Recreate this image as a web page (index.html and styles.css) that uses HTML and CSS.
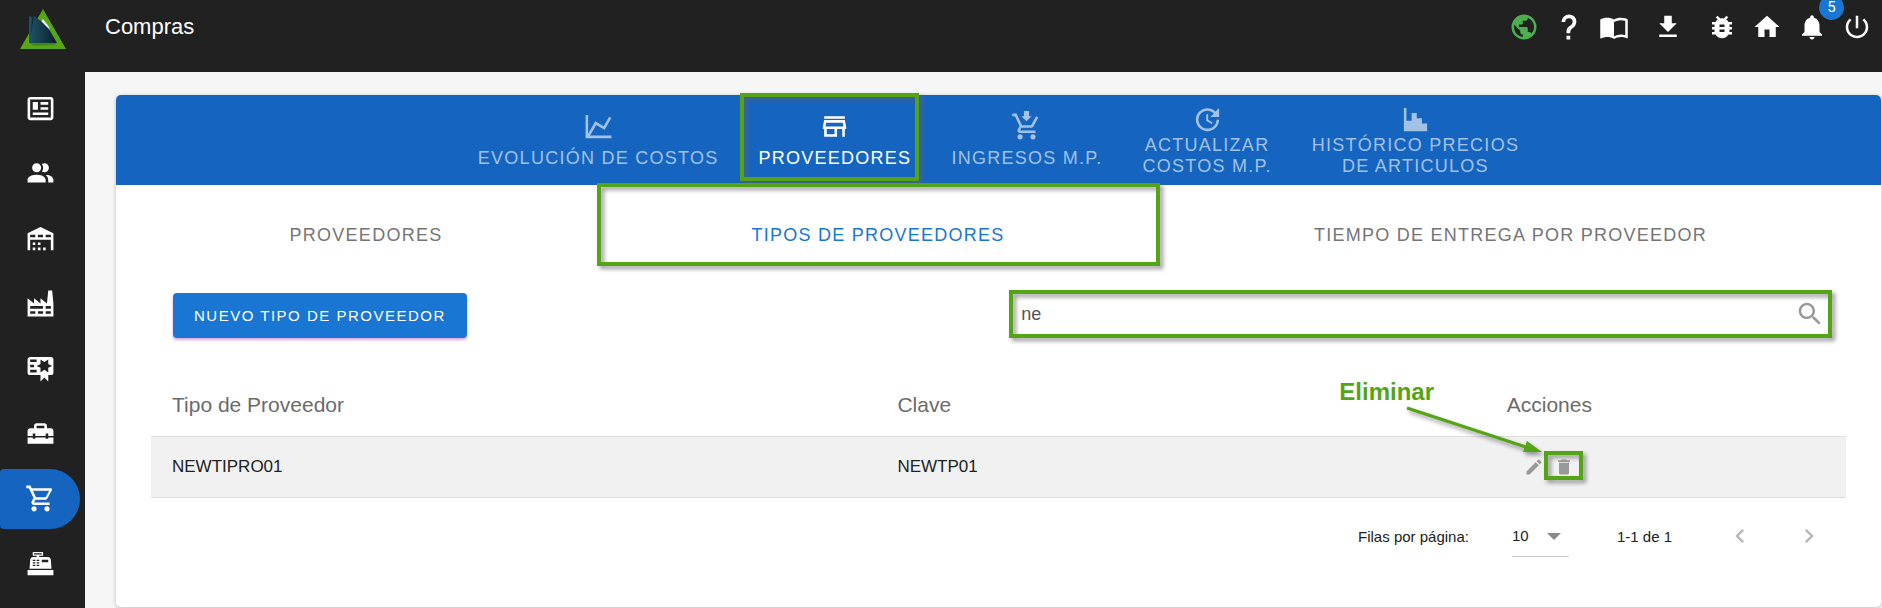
FILE: index.html
```
<!DOCTYPE html>
<html lang="es">
<head>
    <meta charset="UTF-8">
    <meta name="viewport" content="width=device-width, initial-scale=1.0">
    <title>Compras</title>
    <link rel="stylesheet" href="styles.css">
</head>
<body>
    <header class="topbar">
        <a class="logo" href="#" aria-label="Inicio">
            <svg width="46" height="42" viewBox="0 0 46 42">
                <defs>
                    <linearGradient id="azul" x1="0" x2="1">
                        <stop offset="0" stop-color="#1f5368"/>
                        <stop offset="1" stop-color="#08202c"/>
                    </linearGradient>
                </defs>
                <path fill="#58a618" d="M23 0L46 40H0Z"/>
                <path fill="#3f8a12" d="M9 34l28 0-2 2-20 1z"/>
                <path fill="#fff" d="M21 13l2-3 6 8 1 5z"/>
                <path fill="url(#azul)" d="M9 7l3 1 2-1 7 5 8 8 8 14H9z"/>
                <path fill="#0d2f3e" d="M12 8l2-1-3 20z"/>
            </svg>
        </a>
        <h1>Compras</h1>
        <nav class="top-actions">
            <button type="button" class="online" aria-label="Idioma">
                <svg viewBox="0 0 24 24"><path d="M17.9,17.39C17.64,16.59 16.89,16 16,16H15V13A1,1 0 0,0 14,12H8V10H10A1,1 0 0,0 11,9V7H13A2,2 0 0,0 15,5V4.59C17.93,5.77 20,8.64 20,12C20,14.08 19.2,15.97 17.9,17.39M11,19.93C7.05,19.44 4,16.08 4,12C4,11.38 4.08,10.78 4.21,10.21L9,15V16A2,2 0 0,0 11,18M12,2A10,10 0 0,0 2,12A10,10 0 0,0 12,22A10,10 0 0,0 22,12A10,10 0 0,0 12,2Z"/></svg>
            </button>
            <button type="button" aria-label="Ayuda">
                <svg viewBox="0 0 24 24"><path d="M10,19H13V22H10V19M12,2C17.35,2.22 19.68,7.62 16.5,11.67C15.67,12.67 14.33,13.33 13.67,14.17C13,15 13,16 13,17H10C10,15.33 10,13.92 10.67,12.92C11.33,11.92 12.67,11.33 13.5,10.67C15.92,8.43 15.32,5.26 12,5A3,3 0 0,0 9,8H6A6,6 0 0,1 12,2Z"/></svg>
            </button>
            <button type="button" aria-label="Manual">
                <svg viewBox="0 0 24 24"><path d="M21 5c-1.11-.35-2.33-.5-3.5-.5-1.95 0-4.05.4-5.5 1.5-1.45-1.1-3.55-1.5-5.5-1.5S2.45 4.9 1 6v14.65c0 .25.25.5.5.5.1 0 .15-.05.25-.05C3.1 20.45 5.05 20 6.5 20c1.95 0 4.05.4 5.5 1.5 1.35-.85 3.8-1.5 5.5-1.5 1.65 0 3.35.3 4.75 1.05.1.05.15.05.25.05.25 0 .5-.25.5-.5V6c-.6-.45-1.25-.75-2-1zm0 13.5c-1.1-.35-2.3-.5-3.5-.5-1.7 0-4.15.65-5.5 1.5V8c1.35-.85 3.8-1.5 5.5-1.5 1.2 0 2.4.15 3.5.5v11.5z"/></svg>
            </button>
            <button type="button" class="download" aria-label="Descargar">
                <svg viewBox="0 0 24 24"><path d="M5,20H19V18H5M19,9H15V3H9V9H5L12,16L19,9Z"/></svg>
            </button>
            <button type="button" aria-label="Reportar error">
                <svg viewBox="0 0 24 24"><path d="M14,12H10V10H14M14,16H10V14H14M20,8H17.19C16.74,7.22 16.12,6.55 15.37,6.04L17,4.41L15.59,3L13.42,5.17C12.96,5.06 12.5,5 12,5C11.5,5 11.04,5.06 10.59,5.17L8.41,3L7,4.41L8.62,6.04C7.88,6.55 7.26,7.22 6.81,8H4V10H6.09C6.04,10.33 6,10.66 6,11V12H4V14H6V15C6,15.34 6.04,15.67 6.09,16H4V18H6.81C7.85,19.79 9.78,21 12,21C14.22,21 16.15,19.79 17.19,18H20V16H17.91C17.96,15.67 18,15.34 18,15V14H20V12H18V11C18,10.66 17.96,10.33 17.91,10H20V8Z"/></svg>
            </button>
            <button type="button" aria-label="Inicio">
                <svg viewBox="0 0 24 24"><path d="M10,20V14H14V20H19V12H22L12,3L2,12H5V20H10Z"/></svg>
            </button>
            <button type="button" aria-label="Notificaciones">
                <svg viewBox="0 0 24 24"><path d="M12 22c1.1 0 2-.9 2-2h-4c0 1.1.89 2 2 2zm6-6v-5c0-3.07-1.64-5.64-4.5-6.32V4c0-.83-.67-1.5-1.5-1.5s-1.5.67-1.5 1.5v.68C7.63 5.36 6 7.92 6 11v5l-2 2v1h16v-1l-2-2z"/></svg>
                <span class="badge">5</span>
            </button>
            <button type="button" aria-label="Salir">
                <svg viewBox="0 0 24 24"><path d="M13 3h-2v10h2V3zm4.83 2.17l-1.42 1.42C17.99 7.86 19 9.81 19 12c0 3.87-3.13 7-7 7s-7-3.13-7-7c0-2.19 1.01-4.14 2.58-5.42L6.17 5.17C4.23 6.82 3 9.26 3 12c0 4.97 4.03 9 9 9s9-4.03 9-9c0-2.74-1.23-5.18-3.17-6.83z"/></svg>
            </button>
        </nav>
    </header>

    <div class="layout">
        <!-- Menú lateral -->
        <nav class="sidebar">
            <a href="#" aria-label="Novedades"><svg viewBox="0 0 24 24"><path d="M20 5L20 19L4 19L4 5H20M20 3H4C2.89 3 2 3.89 2 5V19C2 20.11 2.89 21 4 21H20C21.11 21 22 20.11 22 19V5C22 3.89 21.11 3 20 3M18 15H6V17H18V15M10 7H6V13H10V7M12 9H18V7H12V9M18 11H12V13H18V11Z"/></svg></a>
            <a href="#" aria-label="Clientes"><svg viewBox="0 0 24 24"><path d="M13.07 10.41A5 5 0 0 0 13.07 4.59A3.39 3.39 0 0 1 15 4A3.5 3.5 0 0 1 15 11A3.39 3.39 0 0 1 13.07 10.41M5.5 7.5A3.5 3.5 0 1 1 9 11A3.5 3.5 0 0 1 5.5 7.5M16 17V19H2V17S2 13 9 13 16 17 16 17M15.95 13A5.32 5.32 0 0 1 18 17V19H22V17S22 13.37 15.94 13Z"/></svg></a>
            <a href="#" aria-label="Depósito"><svg viewBox="0 0 24 24"><path d="M6 19H8V21H6V19M12 3L2 8V21H4V13H20V21H22V8L12 3M8 11H4V9H8V11M14 11H10V9H14V11M20 11H16V9H20V11M6 15H8V17H6V15M10 15H12V17H10V15M10 19H12V21H10V19M14 19H16V21H14V19Z"/></svg></a>
            <a href="#" aria-label="Producción"><svg viewBox="0 0 24 24"><path d="M4,18V20H8V18H4M4,14V16H14V14H4M10,18V20H14V18H10M16,14V16H20V14H16M16,18V20H20V18H16M2,22V8L7,12V8L12,12V8L17,12L18,2H21L22,12V22H2Z"/></svg></a>
            <a href="#" aria-label="Calidad"><svg viewBox="0 0 24 24"><path d="M4,3C2.89,3 2,3.89 2,5V15A2,2 0 0,0 4,17H12V22L15,19L18,22V17H20A2,2 0 0,0 22,15V5A2,2 0 0,0 20,3H4M12,5L15,7L18,5V8.5L21,10L18,11.5V15L15,13L12,15V11.5L9,10L12,8.5V5M4,5H9V7H4V5M4,9H7V11H4V9M4,13H9V15H4V13Z"/></svg></a>
            <a href="#" aria-label="Mantenimiento"><svg viewBox="0 0 24 24"><path d="M18 16H16V15H8V16H6V15H2V20H22V15H18V16M20 8H17V6C17 4.9 16.1 4 15 4H9C7.9 4 7 4.9 7 6V8H4C2.9 8 2 8.9 2 10V14H6V12H8V14H16V12H18V14H22V10C22 8.9 21.1 8 20 8M15 8H9V6H15V8Z"/></svg></a>
            <a href="#" class="active" aria-label="Compras"><svg viewBox="0 0 24 24"><path d="M17,18A2,2 0 0,1 19,20A2,2 0 0,1 17,22C15.89,22 15,21.1 15,20C15,18.89 15.89,18 17,18M1,2H4.27L5.21,4H20A1,1 0 0,1 21,5C21,5.17 20.95,5.34 20.88,5.5L17.3,11.97C16.96,12.58 16.3,13 15.55,13H8.1L7.2,14.63L7.17,14.75A0.25,0.25 0 0,0 7.42,15H19V17H7C5.89,17 5,16.1 5,15C5,14.65 5.09,14.32 5.24,14.04L6.6,11.59L3,4H1V2M7,18A2,2 0 0,1 9,20A2,2 0 0,1 7,22C5.89,22 5,21.1 5,20C5,18.89 5.89,18 7,18M16,11L18.78,6H6.14L8.5,11H16Z"/></svg></a>
            <a href="#" aria-label="Ventas"><svg viewBox="0 0 24 24"><path fill-rule="evenodd" d="M2 17H22V21H2V17M6.25 7H9V6H6V3H14V6H11V7H17.8C18.8 7 19.8 8 20 9L20.5 16H3.5L4.05 9C4.05 8 5.05 7 6.25 7M13 9V11H18V9H13M6 9V10H8V9H6M9 9V10H11V9H9M6 11V12H8V11H6M9 11V12H11V11H9M6 13V14H8V13H6M9 13V14H11V13H9M7 4V5H13V4H7Z"/></svg></a>
        </nav>

        <main>
            <section class="card">
                <nav class="tabs">
                    <a href="#">
                        <svg viewBox="0 0 24 24"><path d="M16,11.78L20.24,4.45L21.97,5.45L16.74,14.5L10.23,10.75L5.46,19H22V21H2V3H4V17.54L9.5,8L16,11.78Z"/></svg>
                        <span>EVOLUCIÓN DE COSTOS</span>
                    </a>
                    <a href="#" class="active">
                        <svg viewBox="0 0 24 24"><path d="M18.36 9L18.96 12H5.04L5.64 9H18.36M20 4H4V6H20V4M20 7H4L3 12V14H4V20H14V14H18V20H20V14H21V12L20 7M6 18V14H12V18H6Z"/></svg>
                        <span>PROVEEDORES</span>
                        <i class="mark mark-tab"></i>
                    </a>
                    <a href="#">
                        <svg viewBox="0 0 24 24"><path d="M10 0V4H8L12 8L16 4H14V0M1 2V4H3L6.6 11.59L5.25 14.04C5.09 14.32 5 14.65 5 15C5 16.1 5.9 17 7 17H19V15H7.42C7.28 15 7.17 14.89 7.17 14.75L7.2 14.63L8.1 13H15.55C16.3 13 16.96 12.59 17.3 11.97L21.16 4.96L19.42 4L15.55 11H8.53L4.27 2M7 18A2 2 0 0 0 7 22A2 2 0 0 0 7 18M17 18A2 2 0 0 0 17 22A2 2 0 0 0 17 18Z"/></svg>
                        <span>INGRESOS M.P.</span>
                    </a>
                    <a href="#" class="two-lines">
                        <svg viewBox="0 0 24 24"><path d="M21,10.12H14.22L16.96,7.3C14.23,4.6 9.81,4.5 7.08,7.2C4.35,9.91 4.35,14.28 7.08,17C9.81,19.7 14.23,19.7 16.96,17C18.32,15.65 19,14.08 19,12.1H21C21,14.08 20.12,16.65 18.36,18.39C14.85,21.87 9.15,21.87 5.64,18.39C2.14,14.92 2.11,9.28 5.62,5.81C9.13,2.34 14.76,2.34 18.27,5.81L21,3V10.12M12.5,8V12.25L16,14.33L15.28,15.54L11,13V8H12.5Z"/></svg>
                        <span>ACTUALIZAR<br>COSTOS M.P.</span>
                    </a>
                    <a href="#" class="two-lines">
                        <svg viewBox="0 0 24 24"><path d="M3,3H5V13H9V7H13V11H17V15H21V21H3V3Z"/></svg>
                        <span>HISTÓRICO PRECIOS<br>DE ARTICULOS</span>
                    </a>
                </nav>

                <nav class="subtabs">
                    <a href="#">PROVEEDORES</a>
                    <a href="#" class="active">TIPOS DE PROVEEDORES<i class="mark mark-subtab"></i></a>
                    <a href="#">TIEMPO DE ENTREGA POR PROVEEDOR</a>
                </nav>

                <div class="toolbar">
                    <button type="button" class="btn">NUEVO TIPO DE PROVEEDOR</button>
                    <div class="search">
                        <input type="text" id="buscar" aria-label="Buscar" value="ne">
                        <svg viewBox="0 0 24 24"><path d="M15.5 14h-.79l-.28-.27C15.41 12.59 16 11.11 16 9.5 16 5.91 13.09 3 9.5 3S3 5.91 3 9.5 5.91 16 9.5 16c1.61 0 3.09-.59 4.23-1.57l.27.28v.79l5 4.99L20.49 19l-4.99-5zm-6 0C7.01 14 5 11.99 5 9.5S7.01 5 9.5 5 14 7.01 14 9.5 11.99 14 9.5 14z"/></svg>
                        <i class="mark mark-search"></i>
                    </div>
                </div>

                <table>
                    <thead>
                        <tr>
                            <th class="col-tipo">Tipo de Proveedor</th>
                            <th class="col-clave">Clave</th>
                            <th class="col-acciones">Acciones</th>
                        </tr>
                    </thead>
                    <tbody>
                        <tr>
                            <td>NEWTIPRO01</td>
                            <td>NEWTP01</td>
                            <td>
                                <div class="acciones">
                                    <button type="button" aria-label="Editar">
                                        <svg viewBox="0 0 24 24"><path d="M3 17.25V21h3.75L17.81 9.94l-3.75-3.75L3 17.25zM20.71 7.04c.39-.39.39-1.02 0-1.41l-2.34-2.34c-.39-.39-1.02-.39-1.41 0l-1.83 1.83 3.75 3.75 1.83-1.83z"/></svg>
                                    </button>
                                    <button type="button" aria-label="Eliminar">
                                        <svg viewBox="0 0 24 24"><path d="M6 19c0 1.1.9 2 2 2h8c1.1 0 2-.9 2-2V7H6v12zM19 4h-3.5l-1-1h-5l-1 1H5v2h14V4z"/></svg>
                                        <i class="mark mark-delete"></i>
                                    </button>
                                    <div class="callout">
                                        <span>Eliminar</span>
                                        <svg width="210" height="56" viewBox="0 0 210 56">
                                            <path d="M68 4L190 44" stroke="#54a515" stroke-width="3"/>
                                            <path d="M203 48L188 37L184 48Z" fill="#54a515"/>
                                        </svg>
                                    </div>
                                </div>
                            </td>
                        </tr>
                    </tbody>
                </table>

                <div class="pager">
                    <label for="filas">Filas por página:</label>
                    <div class="select">
                        <select id="filas">
                            <option>10</option>
                            <option>25</option>
                            <option>50</option>
                        </select>
                        <svg width="14" height="7" viewBox="0 0 14 7"><path d="M0 0H14L7 7Z"/></svg>
                    </div>
                    <span class="range">1-1 de 1</span>
                    <div class="pages">
                        <button type="button" aria-label="Anterior"><svg viewBox="0 0 24 24"><path d="M15.41 7.41L14 6l-6 6 6 6 1.41-1.41L10.83 12z"/></svg></button>
                        <button type="button" aria-label="Siguiente"><svg viewBox="0 0 24 24"><path d="M10 6L8.59 7.41 13.17 12l-4.58 4.59L10 18l6-6z"/></svg></button>
                    </div>
                </div>
            </section>
        </main>
    </div>
</body>
</html>
```
FILE: styles.css
```
* {
    box-sizing: border-box;
}
body {
    font-family: "Liberation Sans", Arial, sans-serif;
    margin: 0;
    min-height: 100vh;
    display: flex;
    flex-direction: column;
    background-color: #f6f6f6;
    color: #212121;
}
a {
    color: inherit;
    text-decoration: none;
}
button {
    font-family: inherit;
    padding: 0;
    border: none;
    background: none;
    color: inherit;
    cursor: pointer;
}
svg {
    display: block;
    fill: currentColor;
}

/* Barra superior */
.topbar {
    height: 72px;
    display: flex;
    align-items: flex-start;
    background-color: #212121;
    color: #fff;
}
.logo {
    width: 105px;
    padding: 9px 0 0 20px;
}
h1 {
    margin: 0;
    padding-top: 14px;
    font-size: 22px;
    line-height: 26px;
    font-weight: normal;
}
.top-actions {
    display: flex;
    gap: 15px;
    margin-left: auto;
    padding: 12px 10px 0 0;
}
.top-actions button {
    position: relative;
}
.top-actions svg {
    width: 30px;
    height: 30px;
}
.top-actions .online {
    color: #4caf50;
}
.top-actions .download {
    margin: 0 9px;
}
.badge {
    position: absolute;
    top: -17px;
    left: 22px;
    width: 25px;
    height: 25px;
    border-radius: 50%;
    background-color: #1976d2;
    font-family: Roboto, sans-serif;
    font-size: 15px;
    line-height: 25px;
    text-align: center;
}

.layout {
    flex: 1;
    display: flex;
}
.sidebar {
    width: 85px;
    padding: 7px 5px 0 0;
    display: flex;
    flex-direction: column;
    gap: 5px;
    background-color: #212121;
    color: #fff;
}
.sidebar a {
    height: 60px;
    display: flex;
    align-items: center;
    justify-content: center;
    padding-bottom: 1px;
    border-radius: 4px 30px 30px 4px;
}
.sidebar a.active {
    background-color: #1565c0;
}
.sidebar svg {
    width: 31px;
    height: 31px;
}
main {
    flex: 1;
    padding: 23px 1px 0 31px;
}
.card {
    border-radius: 5px;
    background-color: #fff;
    box-shadow: 0 1px 4px rgba(0, 0, 0, 0.25);
    padding-bottom: 50px;
}

/* Pestañas */
.tabs {
    min-height: 90px;
    display: flex;
    justify-content: center;
    border-radius: 5px 5px 0 0;
    background-color: #1565c0;
    color: #a1c1e6;
    font-size: 18px;
    line-height: 21px;
    letter-spacing: 0.07em;
    text-align: center;
}
.tabs a {
    position: relative;
    padding: 0 20px;
    display: flex;
    flex-direction: column;
    align-items: center;
    justify-content: center;
    gap: 6px;
}
.tabs a.two-lines {
    gap: 0;
}
.tabs a.active {
    color: #fff;
}
.tabs svg {
    width: 31px;
    height: 31px;
}
.subtabs {
    height: 100px;
    display: grid;
    grid-template-columns: 500fr 524fr 741fr;
    color: #757575;
    font-size: 18px;
    letter-spacing: 0.07em;
}
.subtabs a {
    position: relative;
    display: flex;
    align-items: center;
    justify-content: center;
}
.subtabs a.active {
    color: #1976d2;
}

/* Recuadros verdes */
.mark {
    position: absolute;
    border: 4px solid #54a515;
    filter: drop-shadow(3px 3px 2px rgba(100, 95, 100, 0.65));
    pointer-events: none;
}
.mark-tab {
    inset: -2px 12px 4px 2px;
}
.mark-subtab {
    inset: -2px -20px 19px -19px;
}
.mark-search {
    inset: 0;
}
.mark-delete {
    inset: -6px -9px -3px -10px;
}

.toolbar {
    display: flex;
    align-items: flex-end;
    justify-content: space-between;
    padding: 5px 49px 36px 57px;
}
.btn {
    height: 45px;
    padding: 0 21px;
    border-radius: 4px;
    background-color: #1976d2;
    box-shadow: 0 2px 3px rgba(156, 39, 176, 0.4);
    color: #fff;
    font-size: 15px;
    letter-spacing: 0.1em;
}
.search {
    position: relative;
    width: 49.6%;
    height: 48px;
    display: flex;
    align-items: center;
    padding: 0 7px 0 12px;
    color: #999;
}
.search input {
    flex: 1;
    padding: 0;
    border: none;
    outline: none;
    background: none;
    color: #555;
    font-family: inherit;
    font-size: 18px;
}
.search svg {
    width: 30px;
    height: 30px;
}

/* Tabla */
table {
    width: calc(100% - 70px);
    margin: 0 35px;
    border-collapse: collapse;
    table-layout: fixed;
}
th {
    height: 62px;
    padding: 1px 21px 0;
    color: #6b6b6b;
    font-size: 21px;
    font-weight: normal;
    text-align: left;
}
td {
    height: 61px;
    padding: 0 21px;
    border: solid #ddd;
    border-width: 1px 0;
    background-color: #f1f1f1;
    font-size: 17px;
}
.col-tipo {
    width: 42.8%;
}
.col-clave {
    width: 22.2%;
}
.col-acciones {
    text-align: center;
}
.acciones {
    position: relative;
    width: 50px;
    margin: 0 auto;
    display: flex;
    gap: 10px;
    color: #999;
}
.acciones button {
    position: relative;
}
.acciones button svg {
    width: 20px;
    height: 20px;
}
.callout {
    position: absolute;
    top: -77px;
    left: -185px;
    color: #54a515;
    font-size: 24px;
    line-height: 24px;
    font-weight: bold;
    pointer-events: none;
}
.callout svg {
    filter: drop-shadow(2px 3px 2px rgba(0, 0, 0, 0.4));
}

/* Paginación */
.pager {
    display: flex;
    align-items: center;
    justify-content: flex-end;
    padding: 18px 58px 0 0;
    font-size: 15px;
}
.select {
    position: relative;
    width: 57px;
    margin: 0 48px 0 43px;
    color: #8a8a8a;
}
.select select {
    width: 100%;
    height: 41px;
    padding: 0;
    border: none;
    border-bottom: 1px solid #ccc;
    background: none;
    appearance: none;
    color: #212121;
    font-family: inherit;
    font-size: 15px;
}
.select svg {
    position: absolute;
    top: 17px;
    right: 8px;
    pointer-events: none;
}
.pages {
    display: flex;
    gap: 41px;
    margin-left: 54px;
    color: #b5b5b5;
}
.pages svg {
    width: 28px;
    height: 28px;
}
```
